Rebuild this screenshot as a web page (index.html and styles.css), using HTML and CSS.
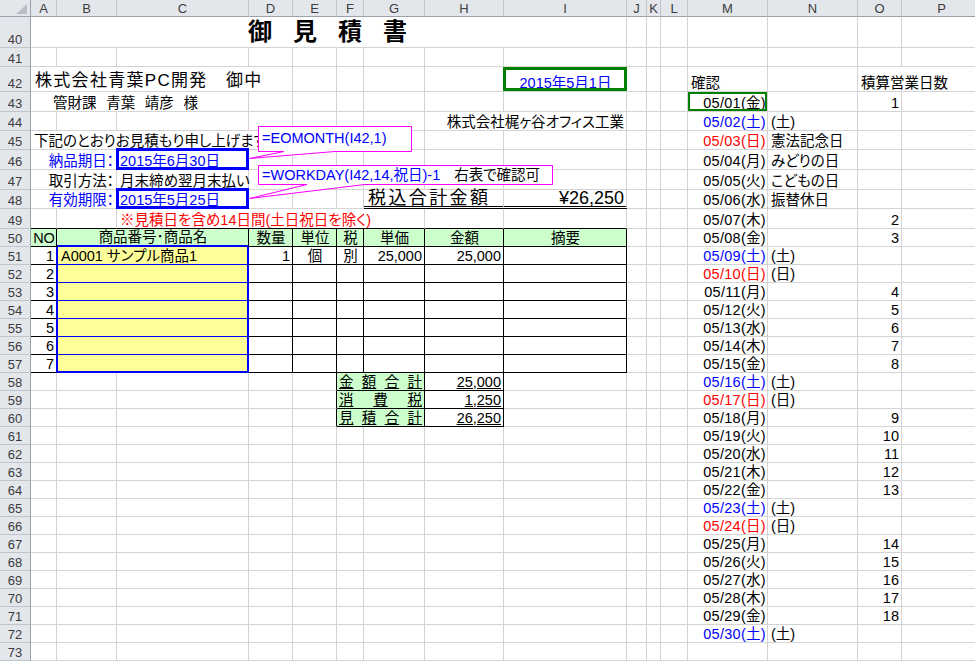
FILE: index.html
```html
<!DOCTYPE html>
<html lang="ja">
<head>
<meta charset="utf-8">
<title>御見積書</title>
<link rel="stylesheet" href="styles.css">
</head>
<body>
<div class="sheet">
  <div class="row colhdr">
    <div class="corner"><span class="tri"></span></div>
    <div>A</div><div>B</div><div>C</div><div>D</div><div>E</div><div>F</div><div>G</div><div>H</div><div>I</div><div>J</div><div>K</div><div>L</div><div>M</div><div>N</div><div>O</div><div>P</div>
  </div>
  <div class="row h31"><div class="rh">40</div><div class="s9 title">御見積書</div><div></div><div></div><div></div><div></div><div></div><div></div><div></div></div>
  <div class="row h19"><div class="rh">41</div><div></div><div></div><div></div><div></div><div></div><div></div><div></div><div></div><div></div><div></div><div></div><div></div><div></div><div></div><div></div><div></div></div>
  <div class="row h25"><div class="rh">42</div><div class="s4 big">株式会社青葉PC開発　御中</div><div></div><div></div><div></div><div></div><div class="gbox blue ctr">2015年5月1日</div><div></div><div></div><div></div><div>確認</div><div></div><div class="s2">積算営業日数</div></div>
  <div class="row h20"><div class="rh">43</div><div class="s3 ind">管財課&ensp;&#8198;青葉&ensp;&#8198;靖彦&ensp;&#8198;様</div><div></div><div></div><div></div><div></div><div></div><div></div><div></div><div></div><div></div><div class="gbox2 r dt">05/01(金)</div><div></div><div class="r">1</div><div></div></div>
  <div class="row h19"><div class="rh">44</div><div></div><div></div><div></div><div></div><div></div><div></div><div></div><div class="s2 r">株式会社梶ヶ谷オフィス工業</div><div></div><div></div><div></div><div class="r dt blue">05/02(土)</div><div>(土)</div><div></div><div></div></div>
  <div class="row h19"><div class="rh">45</div><div class="s4">下記のとおりお見積もり申し上げます</div><div></div><div></div><div></div><div></div><div></div><div></div><div></div><div></div><div class="r dt red">05/03(日)</div><div>憲法記念日</div><div></div><div></div></div>
  <div class="row h20"><div class="rh">46</div><div class="s2 r blue">納品期日：</div><div class="bbox blue">2015年6月30日</div><div></div><div></div><div></div><div></div><div></div><div></div><div></div><div></div><div></div><div class="r dt">05/04(月)</div><div>みどりの日</div><div></div><div></div></div>
  <div class="row h20"><div class="rh">47</div><div class="s2 r">取引方法：</div><div>月末締め翌月末払い</div><div></div><div></div><div></div><div></div><div></div><div></div><div></div><div></div><div></div><div class="r dt">05/05(火)</div><div>こどもの日</div><div></div><div></div></div>
  <div class="row h19"><div class="rh">48</div><div class="s2 r blue">有効期限：</div><div class="bbox blue">2015年5月25日</div><div></div><div></div><div></div><div class="s2 dbl total">税込合計金額</div><div class="dbl r amount">¥26,250</div><div></div><div></div><div></div><div class="r dt">05/06(水)</div><div>振替休日</div><div></div><div></div></div>
  <div class="row h20"><div class="rh">49</div><div class="bb"></div><div class="bb"></div><div class="s5 bb red">※見積日を含め14日間(土日祝日を除く)</div><div class="bb"></div><div class="bb"></div><div></div><div></div><div></div><div class="r dt">05/07(木)</div><div></div><div class="r">2</div><div></div></div>
  <div class="row"><div class="rh">50</div><div class="th">NO</div><div class="s2 th thb">商品番号･商品名</div><div class="th">数量</div><div class="th">単位</div><div class="th">税</div><div class="th">単価</div><div class="th">金額</div><div class="th">摘要</div><div></div><div></div><div></div><div class="r dt">05/08(金)</div><div></div><div class="r">3</div><div></div></div>
  <div class="row"><div class="rh">51</div><div class="td ya r">1</div><div class="s2 y">A0001 サンプル商品1</div><div class="td r">1</div><div class="td ctr">個</div><div class="td ctr">別</div><div class="td r">25,000</div><div class="td r">25,000</div><div class="td"></div><div></div><div></div><div></div><div class="r dt blue">05/09(土)</div><div>(土)</div><div></div><div></div></div>
  <div class="row"><div class="rh">52</div><div class="td ya r">2</div><div class="s2 y"></div><div class="td"></div><div class="td"></div><div class="td"></div><div class="td"></div><div class="td"></div><div class="td"></div><div></div><div></div><div></div><div class="r dt red">05/10(日)</div><div>(日)</div><div></div><div></div></div>
  <div class="row"><div class="rh">53</div><div class="td ya r">3</div><div class="s2 y"></div><div class="td"></div><div class="td"></div><div class="td"></div><div class="td"></div><div class="td"></div><div class="td"></div><div></div><div></div><div></div><div class="r dt">05/11(月)</div><div></div><div class="r">4</div><div></div></div>
  <div class="row"><div class="rh">54</div><div class="td ya r">4</div><div class="s2 y"></div><div class="td"></div><div class="td"></div><div class="td"></div><div class="td"></div><div class="td"></div><div class="td"></div><div></div><div></div><div></div><div class="r dt">05/12(火)</div><div></div><div class="r">5</div><div></div></div>
  <div class="row"><div class="rh">55</div><div class="td ya r">5</div><div class="s2 y"></div><div class="td"></div><div class="td"></div><div class="td"></div><div class="td"></div><div class="td"></div><div class="td"></div><div></div><div></div><div></div><div class="r dt">05/13(水)</div><div></div><div class="r">6</div><div></div></div>
  <div class="row"><div class="rh">56</div><div class="td ya r">6</div><div class="s2 y"></div><div class="td"></div><div class="td"></div><div class="td"></div><div class="td"></div><div class="td"></div><div class="td"></div><div></div><div></div><div></div><div class="r dt">05/14(木)</div><div></div><div class="r">7</div><div></div></div>
  <div class="row"><div class="rh">57</div><div class="td ya r">7</div><div class="s2 y ylast"></div><div class="td"></div><div class="td"></div><div class="td"></div><div class="td"></div><div class="td"></div><div class="td"></div><div></div><div></div><div></div><div class="r dt">05/15(金)</div><div></div><div class="r">8</div><div></div></div>
  <div class="row"><div class="rh">58</div><div></div><div></div><div></div><div></div><div class="brk"></div><div class="s2 sum"><u>金</u><u>額</u><u>合</u><u>計</u></div><div class="td r"><u>25,000</u></div><div></div><div></div><div></div><div></div><div class="r dt blue">05/16(土)</div><div>(土)</div><div></div><div></div></div>
  <div class="row"><div class="rh">59</div><div></div><div></div><div></div><div></div><div class="brk"></div><div class="s2 sum"><u>消</u><u>費</u><u>税</u></div><div class="td r"><u>1,250</u></div><div></div><div></div><div></div><div></div><div class="r dt red">05/17(日)</div><div>(日)</div><div></div><div></div></div>
  <div class="row"><div class="rh">60</div><div></div><div></div><div></div><div></div><div class="brk"></div><div class="s2 sum"><u>見</u><u>積</u><u>合</u><u>計</u></div><div class="td r"><u>26,250</u></div><div></div><div></div><div></div><div></div><div class="r dt">05/18(月)</div><div></div><div class="r">9</div><div></div></div>
  <div class="row"><div class="rh">61</div><div></div><div></div><div></div><div></div><div></div><div></div><div></div><div></div><div></div><div></div><div></div><div></div><div class="r dt">05/19(火)</div><div></div><div class="r">10</div><div></div></div>
  <div class="row"><div class="rh">62</div><div></div><div></div><div></div><div></div><div></div><div></div><div></div><div></div><div></div><div></div><div></div><div></div><div class="r dt">05/20(水)</div><div></div><div class="r">11</div><div></div></div>
  <div class="row"><div class="rh">63</div><div></div><div></div><div></div><div></div><div></div><div></div><div></div><div></div><div></div><div></div><div></div><div></div><div class="r dt">05/21(木)</div><div></div><div class="r">12</div><div></div></div>
  <div class="row"><div class="rh">64</div><div></div><div></div><div></div><div></div><div></div><div></div><div></div><div></div><div></div><div></div><div></div><div></div><div class="r dt">05/22(金)</div><div></div><div class="r">13</div><div></div></div>
  <div class="row"><div class="rh">65</div><div></div><div></div><div></div><div></div><div></div><div></div><div></div><div></div><div></div><div></div><div></div><div></div><div class="r dt blue">05/23(土)</div><div>(土)</div><div></div><div></div></div>
  <div class="row"><div class="rh">66</div><div></div><div></div><div></div><div></div><div></div><div></div><div></div><div></div><div></div><div></div><div></div><div></div><div class="r dt red">05/24(日)</div><div>(日)</div><div></div><div></div></div>
  <div class="row"><div class="rh">67</div><div></div><div></div><div></div><div></div><div></div><div></div><div></div><div></div><div></div><div></div><div></div><div></div><div class="r dt">05/25(月)</div><div></div><div class="r">14</div><div></div></div>
  <div class="row"><div class="rh">68</div><div></div><div></div><div></div><div></div><div></div><div></div><div></div><div></div><div></div><div></div><div></div><div></div><div class="r dt">05/26(火)</div><div></div><div class="r">15</div><div></div></div>
  <div class="row"><div class="rh">69</div><div></div><div></div><div></div><div></div><div></div><div></div><div></div><div></div><div></div><div></div><div></div><div></div><div class="r dt">05/27(水)</div><div></div><div class="r">16</div><div></div></div>
  <div class="row"><div class="rh">70</div><div></div><div></div><div></div><div></div><div></div><div></div><div></div><div></div><div></div><div></div><div></div><div></div><div class="r dt">05/28(木)</div><div></div><div class="r">17</div><div></div></div>
  <div class="row"><div class="rh">71</div><div></div><div></div><div></div><div></div><div></div><div></div><div></div><div></div><div></div><div></div><div></div><div></div><div class="r dt">05/29(金)</div><div></div><div class="r">18</div><div></div></div>
  <div class="row"><div class="rh">72</div><div></div><div></div><div></div><div></div><div></div><div></div><div></div><div></div><div></div><div></div><div></div><div></div><div class="r dt blue">05/30(土)</div><div>(土)</div><div></div><div></div></div>
  <div class="row"><div class="rh">73</div><div></div><div></div><div></div><div></div><div></div><div></div><div></div><div></div><div></div><div></div><div></div><div></div><div></div><div></div><div></div><div></div></div>
</div>
<svg class="shapes" width="975" height="662" viewBox="0 0 975 662">
  <path d="M258.5 126.5 H411.5 V151.5 H335 L249.5 158.5 L284 151.5 H258.5 Z" fill="#fff" stroke="#ff00ff"/>
  <path d="M258.5 165.5 H552.5 V184.5 H365 L249.5 198.5 L307 184.5 H258.5 Z" fill="#fff" stroke="#ff00ff"/>
</svg>
<div class="note note1">=EOMONTH(I42,1)</div>
<div class="note note2">=WORKDAY(I42,14,祝日)-1<span class="ok">右表で確認可</span></div>
</body>
</html>
```

FILE: styles.css
```css
* { box-sizing: border-box; }
html, body { margin: 0; padding: 0; background: #fff; }
body {
  width: 975px;
  height: 662px;
  overflow: hidden;
  position: relative;
  font-family: "Liberation Sans", "Noto Sans CJK JP", sans-serif;
  font-size: 14.5px;
  color: #000;
  font-feature-settings: "palt";
}
.sheet { display: flex; flex-direction: column; }
.row {
  display: grid;
  grid-template-columns: 31px 26px 60px 132px 44px 44px 27px 61px 79px 123px 20px 14px 27px 80px 90px 44px 80px;
  height: 18px;
}
.row > div {
  border-right: 1px solid #d4d4d4;
  border-bottom: 1px solid #d4d4d4;
  white-space: nowrap;
  display: flex;
  align-items: flex-end;
  padding: 0 2px 0 3px;
  line-height: 15px;
  position: relative;
  min-width: 0;
}
.h31 { height: 31px; }
.h25 { height: 25px; }
.h20 { height: 20px; }
.h19 { height: 19px; }

.colhdr { height: 17px; }
.colhdr > div {
  background: #e3e7ec;
  border-right-color: #c0c5cb;
  border-bottom-color: #9aa2ab;
  justify-content: center;
  align-items: center;
  color: #3c3c3c;
  font-size: 13px;
  line-height: 15px;
  padding: 0;
}
.colhdr > .corner { justify-content: flex-end; align-items: flex-end; padding: 0 3px 2px 0; border-right-color: #9aa2ab; }
.tri { width: 0; height: 0; border-left: 11px solid transparent; border-bottom: 10px solid #b9bec4; }
.row > .rh {
  background: #e3e7ec;
  border-right-color: #9aa2ab;
  border-bottom-color: #c0c5cb;
  justify-content: center;
  color: #3c3c3c;
  font-size: 13px;
  line-height: 15px;
  padding: 0;
  font-feature-settings: normal;
}

.s2 { grid-column: span 2; }
.s3 { grid-column: span 3; }
.s4 { grid-column: span 4; }
.s5 { grid-column: span 5; }
.s9 { grid-column: span 9; }
.row > .r { justify-content: flex-end; }
.row > .ctr { justify-content: center; }
.row > .dt { letter-spacing: 0.3px; padding-right: 1px; }
.blue { color: #0000ff; }
.red { color: #ff0000; }

.row > .title {
  justify-content: center;
  align-items: center;
  font-size: 24px;
  font-weight: 700;
  letter-spacing: 21px;
  padding-left: 21px;
  line-height: 28px;
}
.row > .big { font-size: 17px; letter-spacing: 1.3px; padding-left: 4px; line-height: 20px; }
.row > .ind { padding-left: 22px; }
.row > .total { font-size: 18px; letter-spacing: 2.4px; padding-left: 4px; line-height: 16px; }
.row > .amount { font-size: 18px; line-height: 16px; }
.row > .dbl { border-bottom: 3px double #000; }

.gbox::after {
  content: "";
  position: absolute;
  left: -1px; right: -1px; top: 0; bottom: 0;
  border: 3px solid #008000;
}
.gbox2::after {
  content: "";
  position: absolute;
  left: 0; right: 0; top: 0; bottom: 0;
  border: 2px solid #008000;
}
.bbox::after {
  content: "";
  position: absolute;
  left: -1px; right: -1px; top: -2px; bottom: -1px;
  border: 3px solid #0000ff;
}

.row > .bb { border-bottom-color: #000; }
.row > .brk { border-right-color: #000; }
.row > .th {
  background: #ccffcc;
  border-right-color: #000;
  border-bottom-color: #000;
  justify-content: center;
}
.row > .thb { border-bottom: 2px solid #0000ff; }
.row > .td { border-right-color: #000; border-bottom-color: #000; }
.row > .ya { border-right-color: #0000ff; }
.row > .y {
  background: #ffff99;
  border-left: 1px solid #0000ff;
  border-right: 2px solid #0000ff;
  border-bottom-color: #0000ff;
}
.row > .ylast { border-bottom: 2px solid #0000ff; }
.row > .sum {
  background: #ccffcc;
  border-right-color: #000;
  border-bottom-color: #000;
  justify-content: space-between;
  padding: 0 2px;
}
u { text-decoration: underline; text-underline-offset: 1px; }

.shapes { position: absolute; left: 0; top: 0; }
.note {
  position: absolute;
  color: #0000ff;
  font-size: 14.5px;
  line-height: 17px;
  white-space: nowrap;
}
.note1 { left: 262px; top: 130px; }
.note2 { left: 262px; top: 167px; }
.ok { color: #000; margin-left: 14px; }
```
